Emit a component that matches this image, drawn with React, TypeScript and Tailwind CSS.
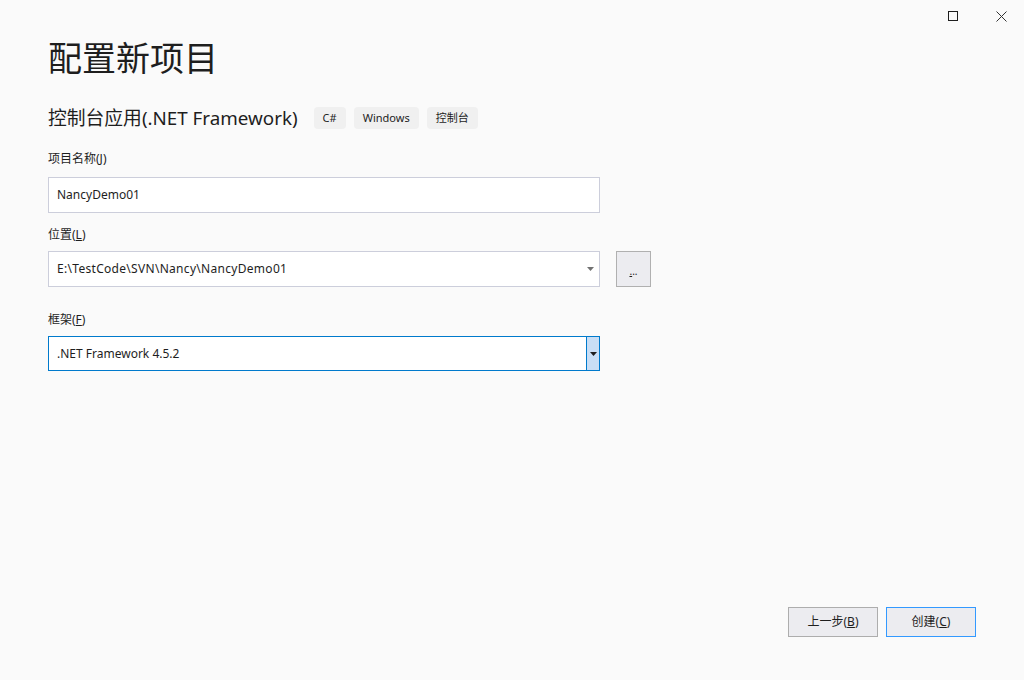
import React from "react";

const font = { fontFamily: '"Noto Sans", "Noto Sans CJK SC", sans-serif' };

function Arrow({ dark }: { dark?: boolean }) {
  return (
    <svg width="7" height="4" viewBox="0 0 7 4" className="block">
      <path d="M0 0h7L3.5 4z" fill={dark ? "#1e1e1e" : "#717171"} />
    </svg>
  );
}

export default function App() {
  return (
    <div
      className="w-[1024px] h-[680px] bg-[#fafafa] text-[#1e1e1e] flex flex-col overflow-hidden"
      style={font}
    >
      <div className="h-[32px] flex justify-end shrink-0">
        <div className="w-[46px] h-[32px] flex items-center justify-center pr-[4px]">
          <div className="w-[10px] h-[10px] border border-[#1e1e1e]" />
        </div>
        <div className="w-[46px] h-[32px] flex items-center justify-center">
          <svg width="11" height="11" viewBox="0 0 11 11">
            <path d="M0.5 0.5L10.5 10.5M10.5 0.5L0.5 10.5" stroke="#333" strokeWidth="1" />
          </svg>
        </div>
      </div>

      <div className="pl-[48px] flex flex-col">
        <h1 className="mt-[6px] text-[34px] leading-[41px] font-normal">配置新项目</h1>

        <div className="mt-[28px] h-[22px] flex items-center">
          <span className="text-[18.8px] leading-[22px]">控制台应用(.NET Framework)</span>
          <div className="ml-[16px] flex gap-[8px]">
            <span className="h-[22px] px-[9px] rounded-[4px] bg-[#f0f0f0] text-[11px] flex items-center">C#</span>
            <span className="h-[22px] px-[9px] rounded-[4px] bg-[#f0f0f0] text-[11px] flex items-center">Windows</span>
            <span className="h-[22px] px-[9px] rounded-[4px] bg-[#f0f0f0] text-[11px] flex items-center">控制台</span>
          </div>
        </div>

        <label className="mt-[22px] text-[12px] leading-[16px]">
          项目名称(<u>J</u>)
        </label>
        <div className="mt-[10px] w-[552px] h-[36px] bg-white border border-[#cccedb] flex items-center pl-[8px] text-[12px]">
          NancyDemo01
        </div>

        <label className="mt-[14px] text-[12px] leading-[16px]">
          位置(<u>L</u>)
        </label>
        <div className="mt-[8px] flex items-center gap-[16px]">
          <div className="w-[552px] h-[36px] bg-white border border-[#cccedb] flex items-center pl-[8px] pr-[3px] text-[12px]">
            <span className="flex-1 tracking-[0.3px]">E:\TestCode\SVN\Nancy\NancyDemo01</span>
            <span className="w-[12px] flex justify-center">
              <Arrow />
            </span>
          </div>
          <button className="w-[35px] h-[36px] bg-[#ececf0] border border-[#b0b0b0] flex items-center justify-center text-[10px] leading-none pt-[4px]">
            <span>
              <u>.</u>..
            </span>
          </button>
        </div>

        <label className="mt-[25px] text-[12px] leading-[16px]">
          框架(<u>F</u>)
        </label>
        <div className="mt-[8px] w-[552px] h-[35px] bg-white border border-[#007acc] flex items-stretch text-[12px]">
          <span className="flex-1 flex items-center pl-[8px]">.NET Framework 4.5.2</span>
          <span className="w-[13px] bg-[#c9def5] border-l border-[#007acc] flex items-center justify-center">
            <Arrow dark />
          </span>
        </div>
      </div>

      <div className="flex-1" />

      <div className="flex justify-end gap-[8px] pr-[48px] pb-[43px]">
        <button className="w-[90px] h-[30px] bg-[#ececf0] border border-[#adadad] text-[12px]">
          上一步(<u>B</u>)
        </button>
        <button className="w-[90px] h-[30px] bg-[#ececf0] border border-[#3399ff] text-[12px]">
          创建(<u>C</u>)
        </button>
      </div>
    </div>
  );
}
